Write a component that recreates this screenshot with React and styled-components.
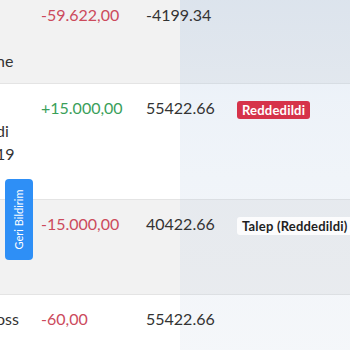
import React from "react";
import styled, { createGlobalStyle } from "styled-components";

const Global = createGlobalStyle`
  html, body { margin: 0; padding: 0; background: #ffffff; overflow: hidden; }
  body { font-family: Lato, "Open Sans", sans-serif; }
`;

const Page = styled.div`
  position: relative;
  width: 350px;
  height: 350px;
  overflow: hidden;
`;

const Table = styled.div`
  display: flex;
  flex-direction: column;
  margin-top: -9px;
`;

const Row = styled.div`
  display: flex;
  align-items: flex-start;
  height: ${(p) => p.$h}px;
  box-sizing: border-box;
  padding-top: 12px;
  background: ${(p) => (p.$alt ? "#f2f2f2" : "#ffffff")};
  border-bottom: 1px solid #e4e4e4;
  font-size: 16px;
  line-height: 23px;
  color: #333333;
`;

const Cell = styled.div`
  position: relative;
  z-index: 1;
  flex: none;
  white-space: nowrap;
`;

const NameCell = styled(Cell)`
  width: 41px;
  overflow: hidden;
  display: flex;
  flex-direction: column;
`;

const NameLine = styled.span`
  display: block;
  margin-left: -4px;
  white-space: nowrap;
  height: 23px;
`;

const AmountCell = styled(Cell)`
  width: 105px;
  color: ${(p) => (p.$positive ? "#3a9f5a" : "#cc4a5c")};
`;

const BalanceCell = styled(Cell)`
  width: 91px;
  color: #333333;
`;

const StatusCell = styled(Cell)`
  flex: 1;
  padding-top: 1px;
`;

const Badge = styled.span`
  display: inline-block;
  height: 18px;
  line-height: 18px;
  padding: 0 5px;
  border-radius: 3px;
  font-size: 13px;
  font-weight: 700;
  letter-spacing: 0.2px;
  background: ${(p) => (p.$variant === "danger" ? "#d6334a" : "rgba(255,255,255,0.85)")};
  color: ${(p) => (p.$variant === "danger" ? "#ffffff" : "#1f1f1f")};
`;

const Shade = styled.div`
  position: absolute;
  z-index: 0;
  top: 0;
  left: 180px;
  right: 0;
  bottom: 0;
  pointer-events: none;
  background: linear-gradient(
    180deg,
    rgba(170, 195, 225, 0.3) 0%,
    rgba(175, 198, 225, 0.22) 30%,
    rgba(180, 198, 222, 0.17) 70%,
    rgba(185, 200, 220, 0.15) 100%
  );
`;

const FeedbackTab = styled.div`
  position: absolute;
  z-index: 2;
  left: 5px;
  top: 179px;
  width: 28px;
  height: 81px;
  border-radius: 4px;
  background: #2e8ff6;
  display: flex;
  align-items: center;
  justify-content: center;
`;

const FeedbackText = styled.span`
  transform: rotate(-90deg);
  white-space: nowrap;
  color: #ffffff;
  font-size: 11px;
  font-family: Lato, "Open Sans", sans-serif;
`;

const rows = [
  { h: 93, alt: true, names: ["", "", "ne"], amount: "-59.622,00", balance: "-4199.34" },
  { h: 116, alt: false, names: ["", "di", "19"], amount: "+15.000,00", positive: true, balance: "55422.66", badge: { text: "Reddedildi", variant: "danger" } },
  { h: 95, alt: true, names: [""], amount: "-15.000,00", balance: "40422.66", badge: { text: "Talep (Reddedildi)", variant: "light" } },
  { h: 80, alt: false, names: ["oss"], amount: "-60,00", balance: "55422.66" },
];

export default function App() {
  return (
    <Page>
      <Global />
      <Table>
        {rows.map((r, i) => (
          <Row key={i} $h={r.h} $alt={r.alt}>
            <NameCell>
              {r.names.map((n, j) => (
                <NameLine key={j}>{n}</NameLine>
              ))}
            </NameCell>
            <AmountCell $positive={r.positive}>{r.amount}</AmountCell>
            <BalanceCell>{r.balance}</BalanceCell>
            <StatusCell>
              {r.badge && <Badge $variant={r.badge.variant}>{r.badge.text}</Badge>}
            </StatusCell>
          </Row>
        ))}
      </Table>
      <Shade />
      <FeedbackTab>
        <FeedbackText>Geri Bildirim</FeedbackText>
      </FeedbackTab>
    </Page>
  );
}
